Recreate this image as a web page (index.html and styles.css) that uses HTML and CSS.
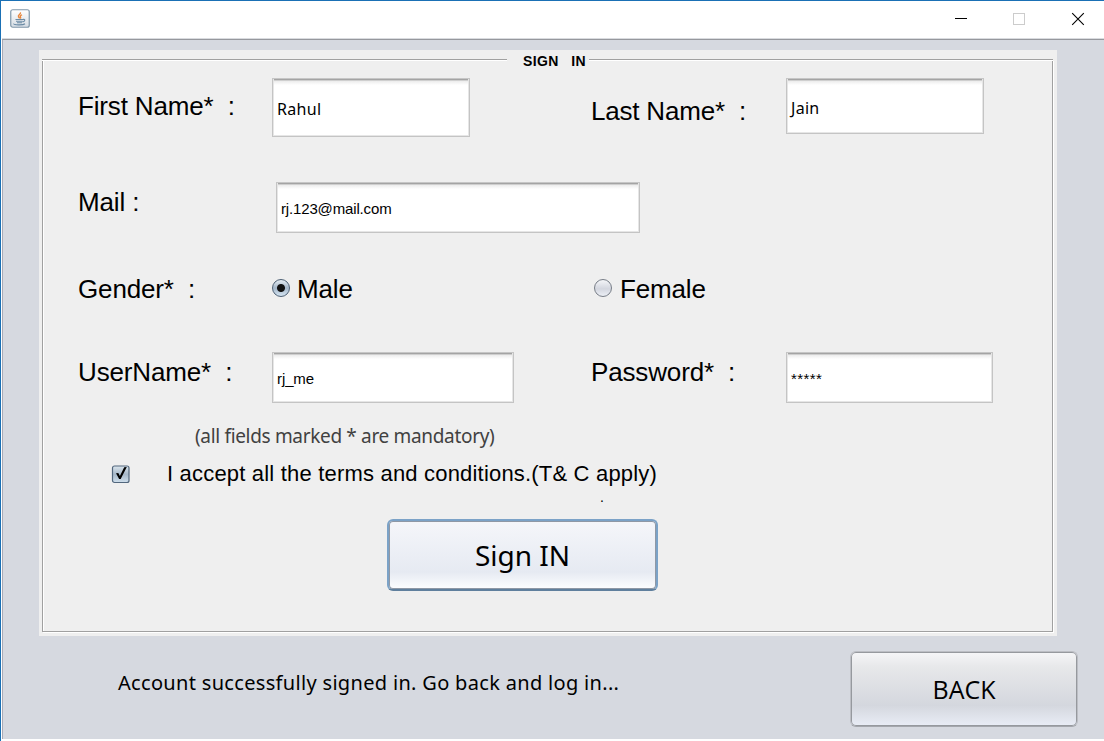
FILE: index.html
```html
<!DOCTYPE html>
<html lang="en">
<head>
<meta charset="utf-8">
<title>Sign In</title>
<link rel="stylesheet" href="styles.css">
</head>
<body>
<div class="window">
  <header class="titlebar">
    <svg class="app-icon" width="20" height="20" viewBox="0 0 20 20">
      <defs><linearGradient id="tile" x1="0" y1="0" x2="0" y2="1"><stop offset="0" stop-color="#fff"/><stop offset="1" stop-color="#d5dce3"/></linearGradient></defs>
      <rect x=".75" y=".75" width="18.5" height="17.5" rx="2" fill="url(#tile)" stroke="#8198aa" stroke-width="1.2"/>
      <path d="M10.400 3.400c.8 1.800-2.900 2.500-1.900 4.400.3.7 1 1 1 1.600M12 5.800c-1.600.6-2.100 1.300-1.500 2.200.3.5.2 1-.2 1.500" fill="none" stroke="#e8883f" stroke-width="1.4"/>
      <path d="M5.500 10.500h7.500M6 12.200h6.500M7 13.800h5M13 10.400c2.600-.4 2.200 2-.5 2.600M4 14.600c-1.300 1.500 9 1.800 11 .2" fill="none" stroke="#6b8ba5" stroke-width="1.1"/>
    </svg>
    <svg class="controls" width="132" height="14" viewBox="0 0 132 14">
      <path d="M0 6.500h12" stroke="#000" fill="none"/>
      <rect x="58.500" y="1.500" width="11" height="11" stroke="#ccc" fill="none"/>
      <path d="M117.200 1.200l11.600 11.600M128.800 1.200l-11.600 11.600" stroke="#000" stroke-width="1.100" fill="none"/>
    </svg>
  </header>
  <main class="content">
    <section class="panel">
      <div class="legend"><span class="rule rule-left"></span><h1 class="legend-text">SIGN   IN</h1><span class="rule rule-right"></span></div>
      <form class="frame">
        <div class="row row-name">
          <label class="label">First Name*  :</label>
          <div class="field field-first">Rahul</div>
          <label class="label label-last">Last Name*  :</label>
          <div class="field field-last">Jain</div>
        </div>
        <div class="row row-mail">
          <label class="label">Mail :</label>
          <div class="field field-mail">rj.123@mail.com</div>
        </div>
        <div class="row row-gender">
          <span class="label">Gender*  :</span>
          <label class="label option"><span class="radio radio-on"></span>Male</label>
          <label class="label option option-female"><span class="radio"></span>Female</label>
        </div>
        <div class="row row-user">
          <label class="label">UserName*  :</label>
          <div class="field field-user">rj_me</div>
          <label class="label">Password*  :</label>
          <div class="field field-pass">*****</div>
        </div>
        <p class="note">(all fields marked * are mandatory)</p>
        <label class="terms">
          <svg class="check" width="20" height="20" viewBox="0 0 20 20">
            <defs><linearGradient id="box" x1="0" y1="0" x2="0" y2="1"><stop offset="0" stop-color="#dce6ee"/><stop offset=".5" stop-color="#a6b8c9"/><stop offset="1" stop-color="#cfdfec"/></linearGradient></defs>
            <rect x="1.500" y="2" width="16.500" height="16.500" rx="2" fill="url(#box)" stroke="#52677d" stroke-width="1.200"/>
            <path d="M5 9.300l2.300-.3 1.600 3L13.200 3.200l2.600-.2L9.700 15H8.100z" fill="#000"/>
          </svg>
          <span class="terms-text">I accept all the terms and conditions.(T&amp; C apply)</span>
        </label>
        <p class="dot">.</p>
        <button class="button button-primary" type="button"><span>Sign IN</span></button>
      </form>
    </section>
    <footer class="footer">
      <p class="status">Account successfully signed in. Go back and log in...</p>
      <button class="button button-back" type="button"><span>BACK</span></button>
    </footer>
  </main>
</div>
</body>
</html>
```
FILE: styles.css
```css
* { box-sizing: border-box; }
body, p, h1 { margin: 0; }
body { background: #fff; color: #000; font-family: "Liberation Sans", Arial, sans-serif; overflow: hidden; }
.window { width: 1104px; height: 741px; border-top: 1px solid #1a70b5; border-left: 1px solid #1a70b5; background: #fff; }
.titlebar { height: 38px; display: flex; justify-content: space-between; align-items: flex-start; padding: 8px 17px 0 9px; }
.controls { margin-top: 3px; }
.content { height: 700px; margin-left: 1px; border-top: 1px solid #96989d; border-left: 1px solid #a9aab6; box-shadow: 0 -1px #d9dbdf; background: #d6d9e0; padding: 10px 0 0 36px; }
.panel { width: 1018px; height: 586px; background: #efefef; padding: 0 3px 3px; }
.legend { height: 20px; display: flex; align-items: flex-start; }
.rule { height: 2px; margin-top: 9px; border-top: 1px solid #a0a0a0; border-bottom: 1px solid #fff; }
.rule-left { width: 465px; }
.rule-right { flex: 1; margin-right: 1px; }
.legend-text { width: 82px; padding-left: 16px; font-size: 14px; line-height: 22px; letter-spacing: .35px; white-space: pre; }
.frame { width: 1011px; height: 572px; margin-top: -10px; padding: 10px 0 0 35px; border: 1px solid #a0a0a0; border-top: 0; box-shadow: 1px 1px #fff, inset 1px 0 #fff; }
.row { display: grid; grid-template-columns: 193px 320px 194px 1fr; align-items: start; height: 90px; }
.label { font-size: 26px; line-height: 30px; letter-spacing: -.15px; white-space: pre; }
.field { display: flex; align-items: center; margin-left: 1px; padding: 2px 0 0 4px; font-size: 15px; letter-spacing: -.1px; border: 1px solid #c4c4c4; border-top-color: #c6c6c6; background: linear-gradient(#a4a4a4 1px, #cfcfcf 1px, #cfcfcf 2px, #ececec 2px, #fff 6px); box-shadow: inset 1px 0 #e6e6e6, inset -1px -1px #e6e6e6; }
.row-name { padding-top: 8px; }
.row-name .label { margin-top: 13px; }
.row-name .label-last { margin-top: 18px; letter-spacing: -.2px; }
.row-name .field { font-family: "Noto Sans", sans-serif; font-size: 16px; letter-spacing: .3px; padding-top: 2px; }
.field-first { width: 198px; height: 59px; }
.field-last { width: 198px; height: 56px; }
.row-name .field-last { padding-top: 3px; }
.row-mail { padding-top: 22px; }
.row-mail .label { margin-top: 5px; }
.field-mail { width: 364px; height: 51px; margin-left: 5px; letter-spacing: -.15px; }
.row-gender { height: 80px; padding-top: 24px; }
.option { display: flex; align-items: center; gap: 6px; margin-left: 1px; }
.option-female { margin-left: 3px; gap: 7px; }
.radio { width: 18px; height: 18px; margin: -2px 1px 0 0; border-radius: 50%; border: 1px solid #777d87; background: linear-gradient(#f4f5f8, #d3d6df 55%, #eceff5); }
.radio-on { border-color: #4d6074; background: radial-gradient(circle, #111 3.500px, transparent 4.500px), linear-gradient(#e6edf3, #a4b6c8 50%, #d4e4f2); }
.row-user { padding-top: 22px; }
.row-user .label { margin-top: 5px; }
.field-user { width: 242px; height: 51px; }
.field-pass { width: 207px; height: 51px; }
.row-user .field-pass { letter-spacing: .4px; }
.note { height: 35px; padding-left: 117px; color: #414141; font: 19px/32px "Noto Sans", sans-serif; letter-spacing: -.33px; white-space: nowrap; }
.terms { display: flex; height: 35px; padding: 9px 0 0 33px; }
.terms-text { margin-left: 36px; font-size: 22px; line-height: 20px; letter-spacing: .19px; white-space: nowrap; }
.dot { height: 29px; padding-left: 522px; font-size: 14px; line-height: 14px; }
.button { display: block; padding: 0; color: #000; }
.button-primary { width: 271px; height: 72px; margin-left: 309px; border: 2px solid #7ba2c7; border-bottom-color: #5f7f9d; border-radius: 6px; background: linear-gradient(#f5f6fa, #e6eaf2 75%, #fdfeff); font: 28px/1 "Noto Sans", sans-serif; box-shadow: inset 0 0 0 1px #8f98a5; }
.footer { display: flex; justify-content: space-between; padding: 15px 26px 0 79px; }
.status { font: 20px/64px "Noto Sans", sans-serif; letter-spacing: .32px; white-space: nowrap; }
.button-back { width: 228px; height: 76px; border: 1px solid #bcbec4; border-bottom-color: #a4a7ad; border-radius: 6px; background: linear-gradient(#f6f6f8, #e7e8ea 20%, #d4d7de 72%, #e9edf6); box-shadow: inset 0 0 0 1px #96999e; font: 25px/1 "Open Sans", sans-serif; }
```
